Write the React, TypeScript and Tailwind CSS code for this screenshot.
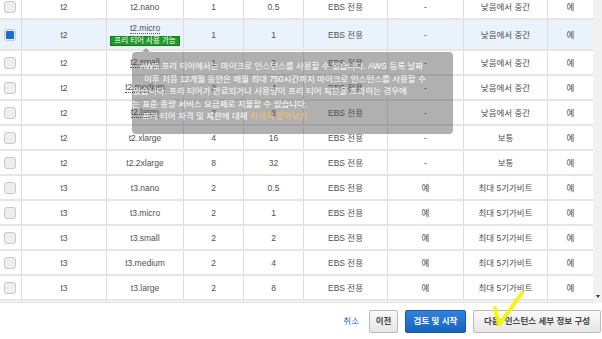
import React from "react";

type Row = {
  fam: string;
  type: string;
  cpu: string;
  mem: string;
  ebs: string;
  net: string;
  dotted?: boolean;
  selected?: boolean;
  badge?: boolean;
  empty?: boolean;
};

const rows: Row[] = [
  { fam: "t2", type: "t2.nano", cpu: "1", mem: "0.5", ebs: "-", net: "낮음에서 중간" },
  { fam: "t2", type: "t2.micro", cpu: "1", mem: "1", ebs: "-", net: "낮음에서 중간", dotted: true, selected: true, badge: true },
  { fam: "t2", type: "t2.small", cpu: "1", mem: "2", ebs: "-", net: "낮음에서 중간", dotted: true },
  { fam: "t2", type: "t2.medium", cpu: "2", mem: "4", ebs: "-", net: "낮음에서 중간", dotted: true },
  { fam: "t2", type: "t2.large", cpu: "2", mem: "8", ebs: "-", net: "낮음에서 중간", dotted: true },
  { fam: "t2", type: "t2.xlarge", cpu: "4", mem: "16", ebs: "-", net: "보통" },
  { fam: "t2", type: "t2.2xlarge", cpu: "8", mem: "32", ebs: "-", net: "보통" },
  { fam: "t3", type: "t3.nano", cpu: "2", mem: "0.5", ebs: "예", net: "최대 5기가비트" },
  { fam: "t3", type: "t3.micro", cpu: "2", mem: "1", ebs: "예", net: "최대 5기가비트" },
  { fam: "t3", type: "t3.small", cpu: "2", mem: "2", ebs: "예", net: "최대 5기가비트" },
  { fam: "t3", type: "t3.medium", cpu: "2", mem: "4", ebs: "예", net: "최대 5기가비트" },
  { fam: "t3", type: "t3.large", cpu: "2", mem: "8", ebs: "예", net: "최대 5기가비트" },
  { fam: "", type: "", cpu: "", mem: "", ebs: "", net: "", empty: true },
];

function Cell({ children, last }: { children?: React.ReactNode; last?: boolean }) {
  return (
    <div
      className={
        "flex flex-col items-center justify-center " +
        (last ? "" : "border-r border-[#dedede]")
      }
    >
      {children}
    </div>
  );
}

function Checkbox({ checked }: { checked?: boolean }) {
  return (
    <div className="w-[12px] h-[12px] rounded-[3px] border border-[#c9c9c9] bg-[#eeeeee] flex items-center justify-center">
      {checked && <div className="w-[8px] h-[8px] rounded-[1px] bg-[#1b6ed0]" />}
    </div>
  );
}

export default function App() {
  return (
    <div
      className="relative w-[602px] h-[339px] bg-white overflow-hidden text-[#505050]"
      style={{ fontFamily: "'Liberation Sans', 'Noto Sans CJK KR', sans-serif" }}
    >
      <div className="flex h-[303px]">
        <div className="w-[593px] overflow-hidden border-b border-[#dcdcdc]">
          <div className="-mt-[5px]">
            {rows.map((r, i) => (
              <div
                key={i}
                className={
                  "grid grid-cols-[22px_85px_77px_60px_60px_84px_76px_84px_45px] border-b-2 border-[#e6e6e6] text-[8.5px] leading-[10px] " +
                  (r.selected ? "h-[31px] bg-[#eaf3fc]" : "h-[25px]")
                }
              >
                <div className="flex items-center pl-[4px] border-r border-[#dedede]">
                  {!r.empty && <Checkbox checked={r.selected} />}
                </div>
                <Cell>{r.fam}</Cell>
                <Cell>
                  {!r.empty && (
                    <span
                      className={
                        r.dotted
                          ? "border-b border-dotted border-[#555] leading-[9px]"
                          : ""
                      }
                    >
                      {r.type}
                    </span>
                  )}
                  {r.badge && (
                    <span className="mt-[2px] bg-[#1e9a26] border border-[#167a1c] text-white text-[7.5px] leading-[8px] px-[3px] whitespace-nowrap">
                      프리 티어 사용 가능
                    </span>
                  )}
                </Cell>
                <Cell>{r.cpu}</Cell>
                <Cell>{r.mem}</Cell>
                <Cell>{r.empty ? "" : "EBS 전용"}</Cell>
                <Cell>{r.ebs}</Cell>
                <Cell>{r.net}</Cell>
                <Cell last>{r.empty ? "" : "예"}</Cell>
              </div>
            ))}
          </div>
        </div>
        <div className="relative w-[9px] bg-[#f1f1f1]">
          <div className="absolute left-[3px] bottom-[5px] w-0 h-0 border-l-[2px] border-r-[2px] border-t-[3px] border-l-transparent border-r-transparent border-t-[#333]" />
        </div>
      </div>

      <div className="flex items-center justify-end h-[36px] pr-[1px] text-[8.5px]">
        <span className="text-[#1a66c0] mr-[10px]">취소</span>
        <button className="w-[29px] h-[23px] flex items-center justify-center rounded-[2px] border border-[#b9b9b9] bg-gradient-to-b from-[#fafafa] to-[#e6e6e6] font-bold text-[#444] mr-[7px]">
          이전
        </button>
        <button className="w-[61px] h-[23px] flex items-center justify-center rounded-[2px] border border-[#1858a8] bg-gradient-to-b from-[#2f83dd] to-[#1663bd] font-bold text-white mr-[7px]">
          검토 및 시작
        </button>
        <button className="w-[128px] h-[23px] flex items-center justify-center rounded-[2px] border border-[#b9b9b9] bg-gradient-to-b from-[#fafafa] to-[#e6e6e6] font-bold text-[#444] whitespace-nowrap">
          다음: 인스턴스 세부 정보 구성
        </button>
      </div>

      {/* Tooltip */}
      <div className="absolute left-[132px] top-[52px] w-[321px] h-[82px] rounded-[4px] bg-[rgba(80,80,80,0.45)] text-white text-[8.5px] leading-[12.5px] pt-[8px] whitespace-nowrap">
        <div className="absolute -top-[4px] left-[10px] w-0 h-0 border-l-[4px] border-r-[4px] border-b-[4px] border-l-transparent border-r-transparent border-b-[rgba(80,80,80,0.45)]" />
        <div className="pl-[8px]">AWS 프리 티어에서는 마이크로 인스턴스를 사용할 수 있습니다. AWS 등록 날짜</div>
        <div className="pl-[12px]">이후 처음 12개월 동안은 매월 최대 750시간까지 마이크로 인스턴스를 사용할 수</div>
        <div className="pl-[1px]">있습니다. 프리 티어가 만료되거나 사용량이 프리 티어 제한을 초과하는 경우에</div>
        <div className="pl-[0px]">는 표준 종량 서비스 요금제로 지불할 수 있습니다.</div>
        <div className="pl-[10px]">
          프리 티어 자격 및 제한에 대해 <span className="text-[#f7c06a]">자세히 알아보기</span>
        </div>
      </div>

      {/* Yellow annotation */}
      <svg className="absolute left-[488px] top-[285px]" width="40" height="45" viewBox="0 0 40 45">
        <path d="M34 8 L11 40 M7 23 L11 40" stroke="#f4f400" strokeOpacity="0.9" strokeWidth="4" strokeLinecap="round" fill="none" />
      </svg>
    </div>
  );
}
